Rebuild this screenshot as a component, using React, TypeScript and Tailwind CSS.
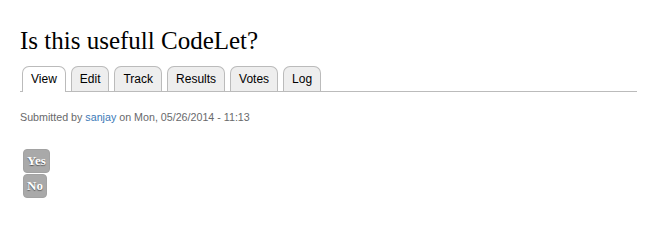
import React from "react";

const tabs = ["View", "Edit", "Track", "Results", "Votes", "Log"];

export default function App() {
  return (
    <div className="w-[645px] h-[236px] bg-white pl-[20px] pr-[8px] pt-[26px]">
      <h1 className="text-[25px] leading-[30px] text-black" style={{ fontFamily: '"Liberation Serif", serif' }}>
        Is this usefull CodeLet?
      </h1>
      <div className="mt-[10px] flex gap-[5px] border-b border-[#bbbbbb] pl-[2px]" style={{ fontFamily: '"Liberation Sans", sans-serif' }}>
        {tabs.map((t, i) => (
          <div
            key={t}
            className={
              "px-[8px] rounded-t-[7px] border border-[#bbbbbb] border-b-0 text-[12px] leading-[24px] text-black " +
              (i === 0 ? "bg-white -mb-px h-[26px]" : "bg-[#eeeeee] h-[25px]")
            }
          >
            {t}
          </div>
        ))}
      </div>
      <div className="mt-[18px] text-[10.7px] leading-[14px] text-[#68696b]" style={{ fontFamily: '"Liberation Sans", sans-serif' }}>
        Submitted by <span className="text-[#3b79b7]">sanjay</span> on Mon, 05/26/2014 - 11:13
      </div>
      <div className="mt-[25px] ml-[3px] flex flex-col items-start gap-[1px]" style={{ fontFamily: '"Liberation Serif", serif' }}>
        {["Yes", "No"].map((b) => (
          <div
            key={b}
            className="h-[24px] px-[3px] rounded-[4px] bg-[#a9a9a9] border border-[#a2a2a2] text-white font-bold text-[13px] leading-[22px] [text-shadow:0_1px_1px_#555]"
          >
            {b}
          </div>
        ))}
      </div>
    </div>
  );
}
